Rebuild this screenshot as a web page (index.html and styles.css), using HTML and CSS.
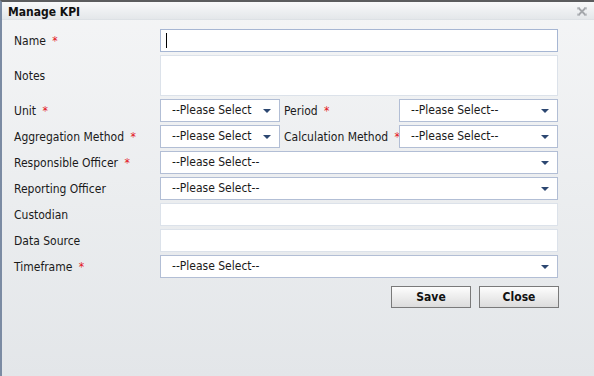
FILE: index.html
```html
<!DOCTYPE html>
<html lang="en">
<head>
  <meta charset="UTF-8" />
  <meta name="viewport" content="width=device-width, initial-scale=1.0"/>
  <title>Manage KPI</title>
  <link rel="stylesheet" href="styles.css">
</head>
<body>
  <div class="window">
    <div class="title-bar">
      <span class="title">Manage KPI</span>
      <span class="close-tool">
        <svg width="10" height="9" viewBox="0 0 10 9">
          <path d="M1.5 1 L8.5 8 M8.5 1 L1.5 8" stroke="#a4a7ab" stroke-width="1.8" fill="none"/>
          <path d="M0.5 0.5 H3 M0.5 0.5 V2.5 M9.5 0.5 H7 M9.5 0.5 V2.5 M0.5 8.5 H3 M0.5 8.5 V6.5 M9.5 8.5 H7 M9.5 8.5 V6.5" stroke="#bfc2c6" stroke-width="1" fill="none"/>
        </svg>
      </span>
    </div>

    <div class="form">
      <div class="row">
        <label class="label">Name <span class="req">*</span></label>
        <div class="field-wrap">
          <input type="text" class="field focused" />
          <span class="caret"></span>
        </div>
      </div>

      <div class="row notes-row">
        <label class="label">Notes</label>
        <textarea class="field notes"></textarea>
      </div>

      <div class="row">
        <label class="label">Unit <span class="req">*</span></label>
        <div class="select small">--Please Select<span class="arrow"></span></div>
        <label class="label label-mid">Period <span class="req">*</span></label>
        <div class="select mid">--Please Select--<span class="arrow"></span></div>
      </div>

      <div class="row">
        <label class="label">Aggregation Method <span class="req">*</span></label>
        <div class="select small">--Please Select<span class="arrow"></span></div>
        <label class="label label-mid">Calculation Method <span class="req">*</span></label>
        <div class="select mid">--Please Select--<span class="arrow"></span></div>
      </div>

      <div class="row">
        <label class="label">Responsible Officer <span class="req">*</span></label>
        <div class="select">--Please Select--<span class="arrow"></span></div>
      </div>

      <div class="row">
        <label class="label">Reporting Officer</label>
        <div class="select">--Please Select--<span class="arrow"></span></div>
      </div>

      <div class="row">
        <label class="label">Custodian</label>
        <input type="text" class="field" />
      </div>

      <div class="row">
        <label class="label">Data Source</label>
        <input type="text" class="field" />
      </div>

      <div class="row">
        <label class="label">Timeframe <span class="req">*</span></label>
        <div class="select">--Please Select--<span class="arrow"></span></div>
      </div>

      <div class="buttons">
        <button class="btn">Save</button>
        <button class="btn">Close</button>
      </div>
    </div>
  </div>
</body>
</html>
```

FILE: styles.css
```css
body {
  margin: 0;
  font-family: 'DejaVu Sans Condensed', 'DejaVu Sans', sans-serif;
  font-size: 12px;
  color: #1a1a1a;
}

.window {
  width: 594px;
  height: 376px;
  box-sizing: border-box;
  border-top: 2px solid #5b5c5e;
  border-left: 2px solid #7b8ba3;
  background: linear-gradient(to bottom, #f4f5f6, #e3e6e9);
  overflow: hidden;
}

.title-bar {
  height: 17px;
  display: flex;
  align-items: center;
  justify-content: space-between;
  padding: 0 7px 0 6px;
  background: linear-gradient(to bottom, #f8f9fa, #e4e7ea);
  border-bottom: 1px solid #dde1e5;
}

.title {
  font-weight: bold;
  font-size: 12px;
  color: #111;
  padding-top: 2px;
}

.close-tool {
  display: flex;
  padding-top: 2px;
}

.form {
  padding: 9px 0 0 12px;
}

.row {
  display: flex;
  align-items: center;
  height: 23px;
  margin-bottom: 3px;
}

.notes-row {
  height: 41px;
}

.label {
  width: 146px;
  flex-shrink: 0;
  padding-top: 1px;
  white-space: nowrap;
}

.label-mid {
  width: 119px;
  padding-left: 4px;
  box-sizing: border-box;
}

.req {
  color: #e3131b;
  margin-left: 3px;
}

.field-wrap {
  position: relative;
}

.field {
  width: 398px;
  height: 23px;
  box-sizing: border-box;
  margin: 0;
  border: 1px solid #dce2ea;
  background: white;
  font-family: inherit;
  font-size: 12px;
  outline: none;
  display: block;
}

.field.focused {
  border-color: #a6b6d3;
}

.notes {
  height: 41px;
  resize: none;
}

.caret {
  position: absolute;
  left: 6px;
  top: 4px;
  width: 1px;
  height: 15px;
  background: #000;
}

.select {
  position: relative;
  width: 398px;
  height: 23px;
  box-sizing: border-box;
  border: 1px solid #b2bed5;
  background: white;
  padding: 0 0 0 11px;
  line-height: 21px;
  white-space: nowrap;
  overflow: hidden;
  flex-shrink: 0;
}

.select.small {
  width: 120px;
}

.select.mid {
  width: 159px;
}

.arrow {
  position: absolute;
  right: 8px;
  top: 9px;
  width: 0;
  height: 0;
  border-left: 4px solid transparent;
  border-right: 4px solid transparent;
  border-top: 4px solid #2c4771;
}

.buttons {
  display: flex;
  justify-content: flex-end;
  gap: 8px;
  width: 545px;
  padding-top: 5px;
}

.btn {
  width: 80px;
  height: 22px;
  border: 1px solid #7a7a7a;
  background: linear-gradient(to bottom, #fdfdfd, #dcdcdc);
  font-family: inherit;
  font-size: 12px;
  font-weight: bold;
  color: #111;
  padding: 0;
  cursor: pointer;
}
```
